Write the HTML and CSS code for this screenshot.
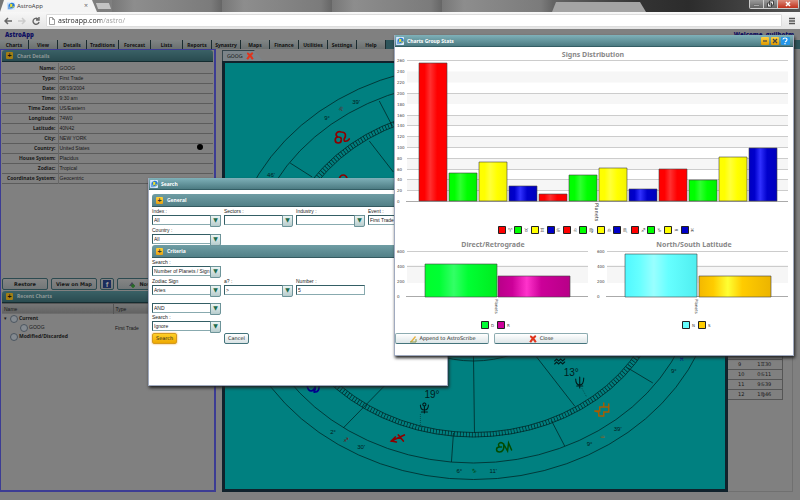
FILE: index.html
```html
<!DOCTYPE html>
<html lang="en">
<head>
<meta charset="utf-8">
<title>AstroApp</title>
<link rel="stylesheet" href="styles.css">
</head>
<body>
<svg class="defs" width="0" height="0">
  <defs>
    <symbol id="globe" viewBox="0 0 10 10"><rect width="10" height="10" rx="1" fill="#dcecff"/><circle cx="6" cy="4.500" r="3.600" fill="#287ad2"/><path d="M4 2l3 1-1 3-2 1z" fill="#f5e52c"/><path d="M1 1l2 5 3 3H1z" fill="#73a7df"/><path d="M7 5l2 1-2 2z" fill="#f5e52c"/></symbol>
    <symbol id="cross" viewBox="0 0 10 10"><path d="M1.500 1.500Q5 3 8.500 9M8.500 1Q4 4 1.500 9" stroke="#e0341c" stroke-width="2.500" fill="none"/></symbol>
    <linearGradient id="red"><stop offset="0" stop-color="#f00"/><stop offset=".2" stop-color="#f00"/><stop offset=".4" stop-color="#ff3030"/><stop offset=".65" stop-color="#f00"/><stop offset="1" stop-color="#f00"/></linearGradient>
    <linearGradient id="green"><stop offset="0" stop-color="#0f0"/><stop offset=".2" stop-color="#0f0"/><stop offset=".4" stop-color="#30ff30"/><stop offset=".65" stop-color="#0f0"/><stop offset="1" stop-color="#00f000"/></linearGradient>
    <linearGradient id="yellow"><stop offset="0" stop-color="#ff0"/><stop offset=".2" stop-color="#ff0"/><stop offset=".4" stop-color="#ffff38"/><stop offset=".65" stop-color="#ff0"/><stop offset="1" stop-color="#f4f400"/></linearGradient>
    <linearGradient id="blue"><stop offset="0" stop-color="#0000c0"/><stop offset=".2" stop-color="#0000cc"/><stop offset=".4" stop-color="#3030ff"/><stop offset=".65" stop-color="#0000cc"/><stop offset="1" stop-color="#0000bc"/></linearGradient>
    <linearGradient id="lime"><stop offset="0" stop-color="#00ff2c"/><stop offset=".2" stop-color="#00ff33"/><stop offset=".4" stop-color="#33ff66"/><stop offset=".6" stop-color="#00ff33"/><stop offset="1" stop-color="#00ec20"/></linearGradient>
    <linearGradient id="magenta"><stop offset="0" stop-color="#b80088"/><stop offset=".2" stop-color="#cc0099"/><stop offset=".4" stop-color="#ff33cc"/><stop offset=".6" stop-color="#cc0099"/><stop offset="1" stop-color="#b80088"/></linearGradient>
    <linearGradient id="aqua"><stop offset="0" stop-color="#50f8ff"/><stop offset=".2" stop-color="#66ffff"/><stop offset=".4" stop-color="#99ffff"/><stop offset=".6" stop-color="#66ffff"/><stop offset="1" stop-color="#50eef0"/></linearGradient>
    <linearGradient id="gold"><stop offset="0" stop-color="#f4b800"/><stop offset=".2" stop-color="#ffcc00"/><stop offset=".4" stop-color="#ffff33"/><stop offset=".6" stop-color="#ffcc00"/><stop offset="1" stop-color="#ecb400"/></linearGradient>
  </defs>
</svg>

<header class="browser">
  <div class="tabstrip">
    <div class="browser-tab"><svg class="icon8"><use href="#globe"/></svg><span>AstroApp</span><button class="tab-x" aria-label="Close tab">×</button></div>
    <div class="new-tab"></div>
    <div class="back-tabs"><i></i><i></i><i></i><i></i></div>
    <div class="front-tab"></div>
    <div class="win-buttons">
      <button aria-label="Minimize"><svg viewBox="0 0 12 8"><path d="M3 5h6v1H3z" fill="#fff" stroke="#555" stroke-width=".6"/></svg></button>
      <button aria-label="Restore"><svg viewBox="0 0 12 8"><path d="M5 1h4v4H5zM3 3h4v4H3z" fill="#eee" stroke="#444"/></svg></button>
      <button class="quit" aria-label="Close"><svg viewBox="0 0 18 8"><path d="M7 2l4 4M11 2L7 6" stroke="#fff" stroke-width="1.500"/></svg></button>
    </div>
  </div>
  <div class="toolbar">
    <button aria-label="Back"><svg viewBox="0 0 8 8"><path d="M8 4H1M4 1L1 4l3 3" fill="none" stroke="#666" stroke-width="1.500"/></svg></button>
    <button aria-label="Forward"><svg viewBox="0 0 8 8"><path d="M0 4h7M4 1l3 3-3 3" fill="none" stroke="#ccc" stroke-width="1.500"/></svg></button>
    <button aria-label="Reload"><svg viewBox="0 0 8 8"><path d="M7 5A3 3 0 1 1 6 2M7 0v3H4" fill="none" stroke="#666" stroke-width="1.400"/></svg></button>
    <div class="address"><svg viewBox="0 0 6 8"><path d="M.5.500h3l2 2v5h-5zM3.500.500v2h2" fill="#fff" stroke="#888" stroke-width=".8"/></svg><input aria-label="Address" value="astroapp.com/astro/"></div>
    <button aria-label="Menu"><svg viewBox="0 0 8 8"><path d="M1 1.500h6M1 4h6M1 6.500h6" stroke="#555" stroke-width="1.500"/></svg></button>
  </div>
</header>

<div class="brand"><b>AstroApp</b><b>Welcome, guilhotm</b></div>
<nav class="menu">
  <button>Charts</button><button>View</button><button>Details</button><button class="wide">Traditions</button><button class="wide">Forecast</button><button class="wide">Lists</button><button>Reports</button><button>Synastry</button><button>Maps</button><button>Finance</button><button>Utilities</button><button>Settings</button><button>Help</button>
</nav>

<main class="workspace">
  <section class="side">
    <h2 class="bar dim"><i class="plus">+</i>Chart Details</h2>
    <table class="details">
      <tr><th>Name:</th><td>GOOG</td></tr>
      <tr><th>Type:</th><td>First Trade</td></tr>
      <tr><th>Date:</th><td>08/19/2004</td></tr>
      <tr><th>Time:</th><td>9:30 am</td></tr>
      <tr><th>Time Zone:</th><td>US/Eastern</td></tr>
      <tr><th>Longitude:</th><td>74W0</td></tr>
      <tr><th>Latitude:</th><td>40N42</td></tr>
      <tr><th>City:</th><td>NEW YORK</td></tr>
      <tr><th>Country:</th><td>United States<span class="dot"></span></td></tr>
      <tr><th>House System:</th><td>Placidus</td></tr>
      <tr><th>Zodiac:</th><td>Tropical</td></tr>
      <tr><th>Coordinate System:</th><td>Geocentric</td></tr>
    </table>
    <div class="actions">
      <button>Restore</button><button>View on Map</button>
      <button class="fb" aria-label="Facebook"><b>f</b></button>
      <button><svg class="icon8" viewBox="0 0 8 8"><path d="M1 6l3-4 3 4z" fill="#445"/><path d="M5 4v4M3 6h4" stroke="#256b25" stroke-width="1.500"/></svg>Now</button>
    </div>
    <h2 class="bar dim"><i class="plus">+</i>Recent Charts</h2>
    <table class="recent">
      <thead><tr><th>Name</th><th>Type</th></tr></thead>
      <tbody>
        <tr><td class="parent"><span class="node"></span><b>Current</b></td><td></td></tr>
        <tr><td class="child"><span class="node"></span>GOOG</td><td>First Trade</td></tr>
        <tr><td><span class="node"></span><b>Modified/Discarded</b></td><td></td></tr>
      </tbody>
    </table>
  </section>

  <section class="chart">
    <div class="chart-tab">GOOG<svg class="icon8"><use href="#cross"/></svg></div>
    <div class="canvas">
      <svg viewBox="226 63 499 426" preserveAspectRatio="none">
        <g fill="none" stroke="#002828" stroke-width=".8">
          <ellipse cx="474" cy="272" rx="243" ry="207.500"/>
          <ellipse cx="474" cy="272" rx="224" ry="191"/>
          <ellipse cx="474" cy="272" rx="194" ry="165"/>
          <ellipse cx="474" cy="272" rx="188" ry="160.500"/>
          <ellipse cx="474" cy="272" rx="191" ry="162.700" stroke-width="5" stroke-dasharray=".7 2.300"/>
          <ellipse cx="474" cy="272" rx="103" ry="89"/>
          <path d="M380 101l13 25M291 163l22 14M370 141l24 31M385 386l-41 42M454 433l-2 29M474 356l1 77M537 357l38 49M552 421l13 25M628 368l25 15"/>
          <path d="M421 414v14M582 388l5 9" stroke-dasharray="1 1" stroke-width=".5"/>
        </g>
        <g class="sign" fill="none">
          <path stroke="#8b0000" stroke-width="1.700" d="M342 140a3 3 0 1 1-3-3c2 0 3 1 3 2M338 137c-3-4 1-6 4-5 5 0 5 4 3 7-1 3 3 3 5 0"/>
          <path stroke="#8b0000" stroke-width="1.700" d="M340 179q1-4 4-4t4 4"/>
          <path stroke="#8b0000" stroke-width="1.700" d="M405 435l-13 6M396 437l-4 4 5 1M399 435l5 6"/>
          <path stroke="#004c00" stroke-width="1.500" d="M504 444c-3-3-7 0-4 3-4 0-4 5 0 5 3 0 5-3 4-8l4 7 1-8 3 7M500 447h2"/>
          <path stroke="#a85c00" stroke-width="1.400" d="M595 411h5v-4h4v-4M599 416h5v-4h5v-5M604 407h5v-3M595 411l4 1v4"/>
          <path stroke="#000090" stroke-width="1.700" d="M308 386c2 8 7 5 8 0 1 5-3 7 0 6 3 0 4-3 4-6"/>
          <path stroke="#001c1c" stroke-width="1.100" d="M421 405q0 5 4 5t4-5M425 406v7M422 412h6M425 403a1.500 1.500 0 1 1-.1 0M576 379q0 6 4 6t4-7M580 377v11M577 386h6M555 361l2-2 2 2 2-2 2 2 2-2M555 364l2-2 2 2 2-2 2 2 2-2"/>
        </g>
        <g class="degrees">
          <text x="325" y="120">9°</text><text x="353" y="104">39'</text><text x="268" y="177">46'</text>
          <text x="331" y="434">2°</text><text x="358" y="449">30'</text><text x="457" y="473">6°</text><text x="490" y="473">11'</text>
          <text x="587" y="446">9°</text><text x="614" y="431">39'</text><text x="671" y="373">9°</text>
          <text class="glyph c-red" x="339" y="111">♌&#xFE0E;</text><text class="glyph c-red" x="344" y="442">♐&#xFE0E;</text><text class="glyph c-green" x="472" y="473">♑&#xFE0E;</text><text class="glyph c-orange" x="600" y="439">♒&#xFE0E;</text><text class="glyph c-blue" x="679" y="361">♓&#xFE0E;</text>
          <text class="big" x="425" y="398">19°</text><text class="big" x="564" y="376">13°</text>
        </g>
      </svg>
    </div>
  </section>

  <aside class="cusps">
    <table>
      <tr><td>8</td><td>25♈&#xFE0E;41</td></tr><tr><td>9</td><td>1♊&#xFE0E;30</td></tr><tr><td>10</td><td>0♋&#xFE0E;11</td></tr><tr><td>11</td><td>9♋&#xFE0E;39</td></tr><tr><td>12</td><td>1♍&#xFE0E;46</td></tr>
    </table>
  </aside>
</main>

<section class="window search">
  <h1 class="title"><svg class="icon8"><use href="#globe"/></svg>Search</h1>
  <form class="form">
    <h2 class="bar"><i class="plus">+</i>General</h2>
    <div class="field"><label for="f1">Index :</label><span class="pick"><select id="f1"><option>All</option></select></span></div>
    <div class="field"><label for="f2">Sectors :</label><span class="pick"><select id="f2"><option></option></select></span></div>
    <div class="field"><label for="f3">Industry :</label><span class="pick"><select id="f3"><option></option></select></span></div>
    <div class="field"><label for="f4">Event :</label><span class="pick"><select id="f4"><option>First Trade</option></select></span></div>
    <div class="field start"><label for="f5">Country :</label><span class="pick"><select id="f5"><option>All</option></select></span></div>
    <h2 class="bar"><i class="plus">+</i>Criteria</h2>
    <div class="field start"><label for="f6">Search :</label><span class="pick"><select id="f6"><option>Number of Planets / Sign</option></select></span></div>
    <div class="field start"><label for="f7">Zodiac Sign</label><span class="pick"><select id="f7"><option>Aries</option></select></span></div>
    <div class="field"><label for="f8">a? :</label><span class="pick"><select id="f8"><option>&gt;</option></select></span></div>
    <div class="field"><label for="f9">Number :</label><input id="f9" value="5"></div>
    <div class="field start join"><span class="pick"><select aria-label="Join"><option>AND</option></select></span></div>
    <div class="field start"><label for="f10">Search :</label><span class="pick"><select id="f10"><option>Ignore</option></select></span></div>
    <button type="button" class="go start">Search</button>
    <button type="button" class="cancel">Cancel</button>
  </form>
</section>

<section class="window stats">
  <h1 class="title"><svg class="icon8"><use href="#globe"/></svg>Charts Group Stats
    <span class="tools"><button aria-label="Minimize"><svg viewBox="0 0 8 8"><path d="M2 4h4"/></svg></button><button aria-label="Close"><svg viewBox="0 0 8 8"><path d="M2 2l4 4M6 2L2 6"/></svg></button><button class="help" aria-label="Help"><svg viewBox="0 0 8 8"><path d="M2 2.500q0-1.500 2-1.500t2 1.500T4 5M4 6v1.200"/></svg></button></span>
  </h1>
  <svg class="plot" viewBox="395 47 398 190">
    <path fill="#f6f6f6" d="M407 71.500h381v11H407zM407 93h381v11H407zM407 115h381v11H407zM407 136.500h381v11H407zM407 158.500h381v11H407zM407 180h381v11H407z"/>
    <path class="grid" d="M407 60.500h381M407 93.500h381M407 115.500h381M407 125.500h381M407 136.500h381M407 147.500h381M407 158.500h381M407 169.500h381M407 179.500h381M407 190.500h381"/>
    <path class="axis" d="M406 201.500h382"/>
    <text class="heading" x="593" y="57">Signs Distribution</text>
    <g class="ticks"><text x="397" y="62">260</text><text x="397" y="73">240</text><text x="397" y="84">220</text><text x="397" y="95">200</text><text x="397" y="106">180</text><text x="397" y="117">160</text><text x="397" y="127">140</text><text x="397" y="138">120</text><text x="397" y="149">100</text><text x="397" y="160">80</text><text x="397" y="171">60</text><text x="397" y="181">40</text><text x="397" y="192">20</text><text x="397" y="203">0</text></g>
    <g class="bars">
      <path fill="url(#red)" d="M419 201V63h28v138z"/><path fill="url(#green)" d="M449 201v-28h28v28z"/><path fill="url(#yellow)" d="M479 201v-39h28v39z"/><path fill="url(#blue)" d="M509 201v-15h28v15z"/>
      <path fill="url(#red)" d="M539 201v-7h28v7z"/><path fill="url(#green)" d="M569 201v-26h28v26z"/><path fill="url(#yellow)" d="M599 201v-33h28v33z"/><path fill="url(#blue)" d="M629 201v-12h28v12z"/>
      <path fill="url(#red)" d="M659 201v-32h28v32z"/><path fill="url(#green)" d="M689 201v-21h28v21z"/><path fill="url(#yellow)" d="M719 201v-44h28v44z"/><path fill="url(#blue)" d="M749 201v-53h28v53z"/>
    </g>
    <text class="cat" transform="translate(595 203) rotate(90)">Planets</text>
    <g class="keys">
      <path fill="#f00" d="M498.500 226.500h7v7h-7zM563.500 226.500h7v7h-7zM631.500 226.500h7v7h-7z"/>
      <path fill="#0f0" d="M514.500 226.500h7v7h-7zM579.500 226.500h7v7h-7zM647.500 226.500h7v7h-7z"/>
      <path fill="#ff0" d="M531.500 226.500h7v7h-7zM597.500 226.500h7v7h-7zM664.500 226.500h7v7h-7z"/>
      <path fill="#0000c8" d="M547.500 226.500h7v7h-7zM613.500 226.500h7v7h-7zM681.500 226.500h7v7h-7z"/>
    </g>
    <g class="ticks legend"><text x="508" y="232">♈&#xFE0E;</text><text x="524" y="232">♉&#xFE0E;</text><text x="540" y="232">♊&#xFE0E;</text><text x="556" y="232">♋&#xFE0E;</text><text x="573" y="232">♌&#xFE0E;</text><text x="589" y="232">♍&#xFE0E;</text><text x="607" y="232">♎&#xFE0E;</text><text x="623" y="232">♏&#xFE0E;</text><text x="641" y="232">♐&#xFE0E;</text><text x="657" y="232">♑&#xFE0E;</text><text x="674" y="232">♒&#xFE0E;</text><text x="690" y="232">♓&#xFE0E;</text></g>
  </svg>
  <div class="pair">
    <svg class="plot" viewBox="395 237 199 96">
      <path fill="#f6f6f6" d="M407 265h181v18H407z"/>
      <path class="grid" d="M407 251.500h181M407 266.500h181"/><path class="axis" d="M406 296.500h182"/>
      <text class="heading" x="493" y="247">Direct/Retrograde</text>
      <g class="ticks"><text x="397" y="253">600</text><text x="397" y="268">400</text><text x="397" y="283">200</text><text x="397" y="298">0</text></g>
      <g class="bars"><path fill="url(#lime)" d="M425 297v-33h72v33z"/><path fill="url(#magenta)" d="M498 297v-21h72v21z"/></g>
      <text class="cat small" transform="translate(495 299) rotate(90)">Planets</text>
      <g class="keys"><path fill="#00ff33" d="M481.500 321.500h7v7h-7z"/><path fill="#cc0099" d="M497.500 321.500h7v7h-7z"/></g>
      <g class="ticks"><text x="491" y="327">D</text><text x="507" y="327">R</text></g>
    </svg>
    <svg class="plot" viewBox="594 237 199 96">
      <path fill="#f6f6f6" d="M607 265h181v18H607z"/>
      <path class="grid" d="M607 251.500h181M607 266.500h181"/><path class="axis" d="M606 296.500h182"/>
      <text class="heading" x="694" y="247">North/South Latitude</text>
      <g class="ticks"><text x="597" y="253">600</text><text x="597" y="268">400</text><text x="597" y="283">200</text><text x="597" y="298">0</text></g>
      <g class="bars"><path fill="url(#aqua)" d="M625 297v-43h72v43z"/><path fill="url(#gold)" d="M699 297v-21h72v21z"/></g>
      <text class="cat small" transform="translate(695 299) rotate(90)">Planets</text>
      <g class="keys"><path fill="#66ffff" d="M682.500 321.500h7v7h-7z"/><path fill="#ffcc00" d="M698.500 321.500h7v7h-7z"/></g>
      <g class="ticks"><text x="692" y="327">N</text><text x="708" y="327">S</text></g>
    </svg>
  </div>
  <div class="footer">
    <button><svg class="icon8" viewBox="0 0 8 8"><path d="M1 7l5-6 1 1-4 5z" fill="#e8b240"/><path d="M1 7h6V4" fill="none" stroke="#8a9a4a"/></svg>Append to AstroScribe</button>
    <button><svg class="icon8"><use href="#cross"/></svg>Close</button>
  </div>
</section>
</body>
</html>
```
FILE: styles.css
```css
* { box-sizing: border-box; }
body {
  margin: 0;
  height: 100vh;
  display: flex;
  flex-direction: column;
  position: relative;
  overflow: hidden;
  background: #808080;
  color: #181818;
  font: 5px/8px "Liberation Sans", "DejaVu Sans", sans-serif;
}
button, input, select { font: inherit; color: inherit; margin: 0; padding: 0; border: 0; border-radius: 0; min-width: 0; }
button { background: none; }
h1, h2 { margin: 0; font: bold 5px/12px "Noto Sans", sans-serif; }
table { border-collapse: collapse; width: 100%; }
td, th { padding: 0; text-align: left; }
.defs { position: absolute; }
.icon8 { width: 8px; height: 8px; flex: none; }

/* browser frame */
.tabstrip { display: flex; height: 12px; background: linear-gradient(90deg, #777, #8a8a8a 35%, #777 65%, #333 80%, #2c2c2c 86%, #555); }
.browser-tab { width: 97px; display: flex; align-items: center; gap: 2px; padding: 0 9px 0 7px; background: #f4f4f4; clip-path: polygon(4px 0, 92px 0, 100% 100%, 0 100%); font: 6px/12px "Open Sans", sans-serif; color: #333; }
.tab-x { margin-left: auto; color: #666; font-size: 7px; }
.new-tab { width: 13px; height: 6px; margin-top: 3px; background: #c4c4c4; transform: skewX(20deg); }
.back-tabs { flex: 1; display: flex; margin-left: 2px; }
.back-tabs i { flex: 1; background: linear-gradient(90deg, #777, #8d8d8d 20%, #7b7b7b 90%, #666); }
.front-tab { width: 94px; margin-right: 103px; background: #a4a4a4; clip-path: polygon(4px 2px, 88px 2px, 100% 100%, 0 100%); }
.win-buttons { display: flex; height: 9px; border: 1px solid #ccc; border-top: 0; border-radius: 0 0 2px 2px; margin-right: 1px; }
.win-buttons button { width: 14px; display: flex; background: linear-gradient(#999, #666); border-right: 1px solid #ccc; }
.win-buttons .quit { width: 20px; background: linear-gradient(#dc8c7c, #c0301c); border: 0; }
.win-buttons svg { width: 100%; height: 8px; }
.toolbar { display: flex; align-items: center; gap: 6px; height: 17px; padding: 0 4px; background: linear-gradient(#f7f7f7, #e4e4e4); }
.toolbar button { width: 8px; height: 8px; display: flex; }
.toolbar svg { width: 8px; height: 8px; }
.address { flex: 1; display: flex; align-items: center; gap: 2px; height: 13px; padding-left: 1px; background: #fff; border: 1px solid #ddd; border-radius: 1px; }
.address input { flex: 1; font: 7px/12px "Open Sans", sans-serif; color: transparent; background: linear-gradient(90deg, #222 44px, #999 44px); background-clip: text; -webkit-background-clip: text; }

/* application header */
.brand { display: flex; justify-content: space-between; height: 11px; padding: 0 6px 0 5px; font: bold 6px/12px "Open Sans", sans-serif; color: #101060; }
.menu { display: flex; height: 9px; background: #2d555b; }
.menu button { width: 29px; background: linear-gradient(#808585, #6a7070); border-right: 1px solid #1a2c30; font: bold 5px/8px "Noto Sans", sans-serif; color: #111; }
.menu .wide { width: 32px; }

.workspace { flex: 1; min-height: 0; display: grid; grid-template-columns: 27% 1fr 9%; padding-bottom: 8px; }
.side { display: flex; flex-direction: column; border: 2px solid #3c3c94; border-top-width: 1px; border-left-width: 1px; padding: 0 1px; }
.bar { display: flex; align-items: center; gap: 4px; height: 12px; padding-left: 4px; background: linear-gradient(#6f9da4, #528087); border-bottom: 1px solid #345a60; border-radius: 3px 3px 0 0; color: #fff; }
.plus { width: 7px; height: 7px; background: linear-gradient(#ffd23a, #e8a010); border-radius: 1px; color: #333; font: bold 7px/7px "Liberation Sans", sans-serif; text-align: center; }
.bar.dim { flex: none; background: linear-gradient(#3a6166, #294b50); border-color: #142c30; color: #8e9898; }
.dim .plus { background: #a27d14; color: #111; }
.details { margin-top: 1px; }
.details tr { height: 10px; border-bottom: 1px solid #5c5c5c; background: #808080; }
.details th { width: 56px; padding-right: 2px; text-align: right; border-right: 1px solid #686868; font: bold 5px/8px "Noto Sans", sans-serif; white-space: nowrap; }
.details td { padding-left: 1px; }
.dot { float: right; width: 6px; height: 6px; margin-right: 10px; border-radius: 50%; background: #000; }
.actions { flex: none; display: flex; gap: 3px; height: 12px; margin-top: auto; margin-bottom: 1px; }
.actions button { flex: 0 0 46px; display: flex; align-items: center; justify-content: center; gap: 3px; background: linear-gradient(#858585, #727778); border: 1px solid #2c4a50; border-radius: 2px; font: bold 5px/8px "DejaVu Sans", sans-serif; }
.actions .fb { flex-basis: 14px; }
.fb b { width: 8px; height: 8px; background: #1c2c5c; color: #999; font: bold 8px/9px "Liberation Sans", sans-serif; text-align: center; }
.recent { margin-bottom: 149px; }
.recent thead th { height: 11px; background: linear-gradient(#777, #626262); font-weight: normal; border-top: 1px solid #555; }
.recent th:first-child { width: 111px; border-right: 1px solid #555; }
.recent th, .recent td { padding-left: 2px; }
.recent tbody tr { height: 9px; }
.recent td:first-child { padding-left: 8px; }
.recent td.child { padding-left: 18px; }
.recent td.parent { padding-left: 2px; }
.parent::before { content: "▾"; display: inline-block; width: 6px; }
.node { display: inline-block; width: 8px; height: 8px; margin-right: 1px; vertical-align: middle; border: 1px solid #4c5660; border-radius: 50%; background: #848a90; }
.recent b { font: bold 5px/8px "Noto Sans", sans-serif; }

.chart { display: flex; flex-direction: column; padding: 1px 0 0 6px; min-height: 0; }
.chart-tab { align-self: flex-start; display: flex; align-items: center; gap: 3px; width: 41px; height: 11px; padding-left: 4px; background: #7c8489; border-left: 1px solid #34444a; border-top: 1px solid #34444a; clip-path: polygon(0 0, 32px 0, 100% 100%, 0 100%); font-family: "DejaVu Sans", sans-serif; }
.canvas { flex: 1; min-height: 0; border: 3px solid #10222c; border-top-width: 2px; background: #008080; }
.canvas svg { display: block; width: 100%; height: 100%; }
.degrees text { font: 6px "Liberation Sans", sans-serif; fill: #001c1c; }
.degrees .glyph { font-family: "DejaVu Sans", sans-serif; }
.degrees .big { font-size: 10px; }
.degrees .c-red { fill: #800000; }
.degrees .c-green { fill: #004400; }
.degrees .c-orange { fill: #8c6020; }
.degrees .c-blue { fill: #000090; }
.sign { stroke-linecap: round; }

.cusps { margin-right: 7px; border: 1px solid #707070; border-left: 0; padding-top: 299px; }
.cusps table { width: 55px; border-right: 1px solid #555; }
.cusps tr { height: 10px; border-bottom: 1px solid #555; }
.cusps td { line-height: 8px; width: 50%; padding-left: 2px; font-family: "DejaVu Sans", sans-serif; }
.cusps td:first-child { padding-left: 10px; }

/* floating windows */
.window { position: absolute; background: #fff; box-shadow: 1px 2px 3px #222; color: #222; border: 1px solid #a0aabf; border-top: 0; }
.title { display: flex; align-items: center; gap: 3px; height: 12px; padding-left: 1px; background: linear-gradient(#7fb1b9, #4c7b82); border-bottom: 1px solid #345e65; color: #fff; }
.search { left: 148px; top: 178px; width: 37.5%; padding-bottom: 41px; }
.form { display: grid; grid-template-columns: repeat(4, 69px); column-gap: 3px; padding: 4px 0 0 3px; }
.form .bar { grid-column: 1 / -1; height: 13px; }
.field { display: flex; flex-direction: column; height: 18px; margin-bottom: 1px; }
.field label { line-height: 8px; }
.start { grid-column: 1; }
.pick { position: relative; display: flex; height: 10px; }
.pick select, .field input { width: 100%; height: 10px; padding: 0 1px; appearance: none; background: #fff; border: 1px solid #88aaaf; border-top-color: #345e65; border-left-color: #345e65; }
.pick::after { content: "▼"; position: absolute; right: 0; top: 0; width: 9px; height: 10px; background: linear-gradient(#edf5f4, #b6cccd); border: 1px solid #6d9499; border-radius: 0 0 2px 0; color: #1c6c4c; font: 6px/8px "DejaVu Sans", sans-serif; text-align: center; pointer-events: none; }
.join { height: 10px; margin-top: 7px; margin-bottom: 0; }
.go, .cancel { justify-self: start; height: 11px; margin-top: 1px; padding: 0 3px; border-radius: 2px; font: 5px/9px "DejaVu Sans", sans-serif; }
.go { border: 1px solid #d49a20; background: linear-gradient(#ffd028, #eea800); box-shadow: 0 0 2px #f0a030; }
.cancel { border: 1px solid #44747c; background: linear-gradient(#fff, #d8e2e4); }

.stats { right: 6px; top: 35px; width: 50%; padding-bottom: 11px; }
.tools { display: flex; gap: 2px; margin-left: auto; padding-right: 3px; }
.tools button { display: flex; width: 8px; height: 8px; background: linear-gradient(#ffd040, #dc9800); border-radius: 1px; }
.tools svg { width: 8px; height: 8px; fill: none; stroke: #444; stroke-width: 1.2; }
.tools .help { width: 9px; background: #2596e8; }
.tools .help svg { stroke: #fff; }
.plot { display: block; width: 100%; }
.pair { display: grid; grid-template-columns: 1fr 1fr; }
.grid { stroke: #ccc; fill: none; }
.axis { stroke: #aaa; fill: none; }
.bars { stroke: #444; stroke-width: 1; stroke-opacity: .6; }
.keys { stroke: #222; stroke-width: 1; }
.heading { font: bold 7px "Noto Sans", sans-serif; fill: #888; text-anchor: middle; }
.ticks { font: 4px "DejaVu Sans", sans-serif; fill: #444; }
.legend { font-size: 5px; }
.cat { font: 5px "DejaVu Sans", sans-serif; fill: #333; }
.cat.small { font-size: 4px; }
.footer { display: flex; gap: 5px; }
.footer button { width: 94px; height: 11px; display: flex; align-items: center; justify-content: center; gap: 3px; border: 1px solid #8cabb0; border-bottom-color: #44747c; border-radius: 2px; background: linear-gradient(#fff, #dde6e8); font: 5px/9px "DejaVu Sans", sans-serif; color: #222; }
```
